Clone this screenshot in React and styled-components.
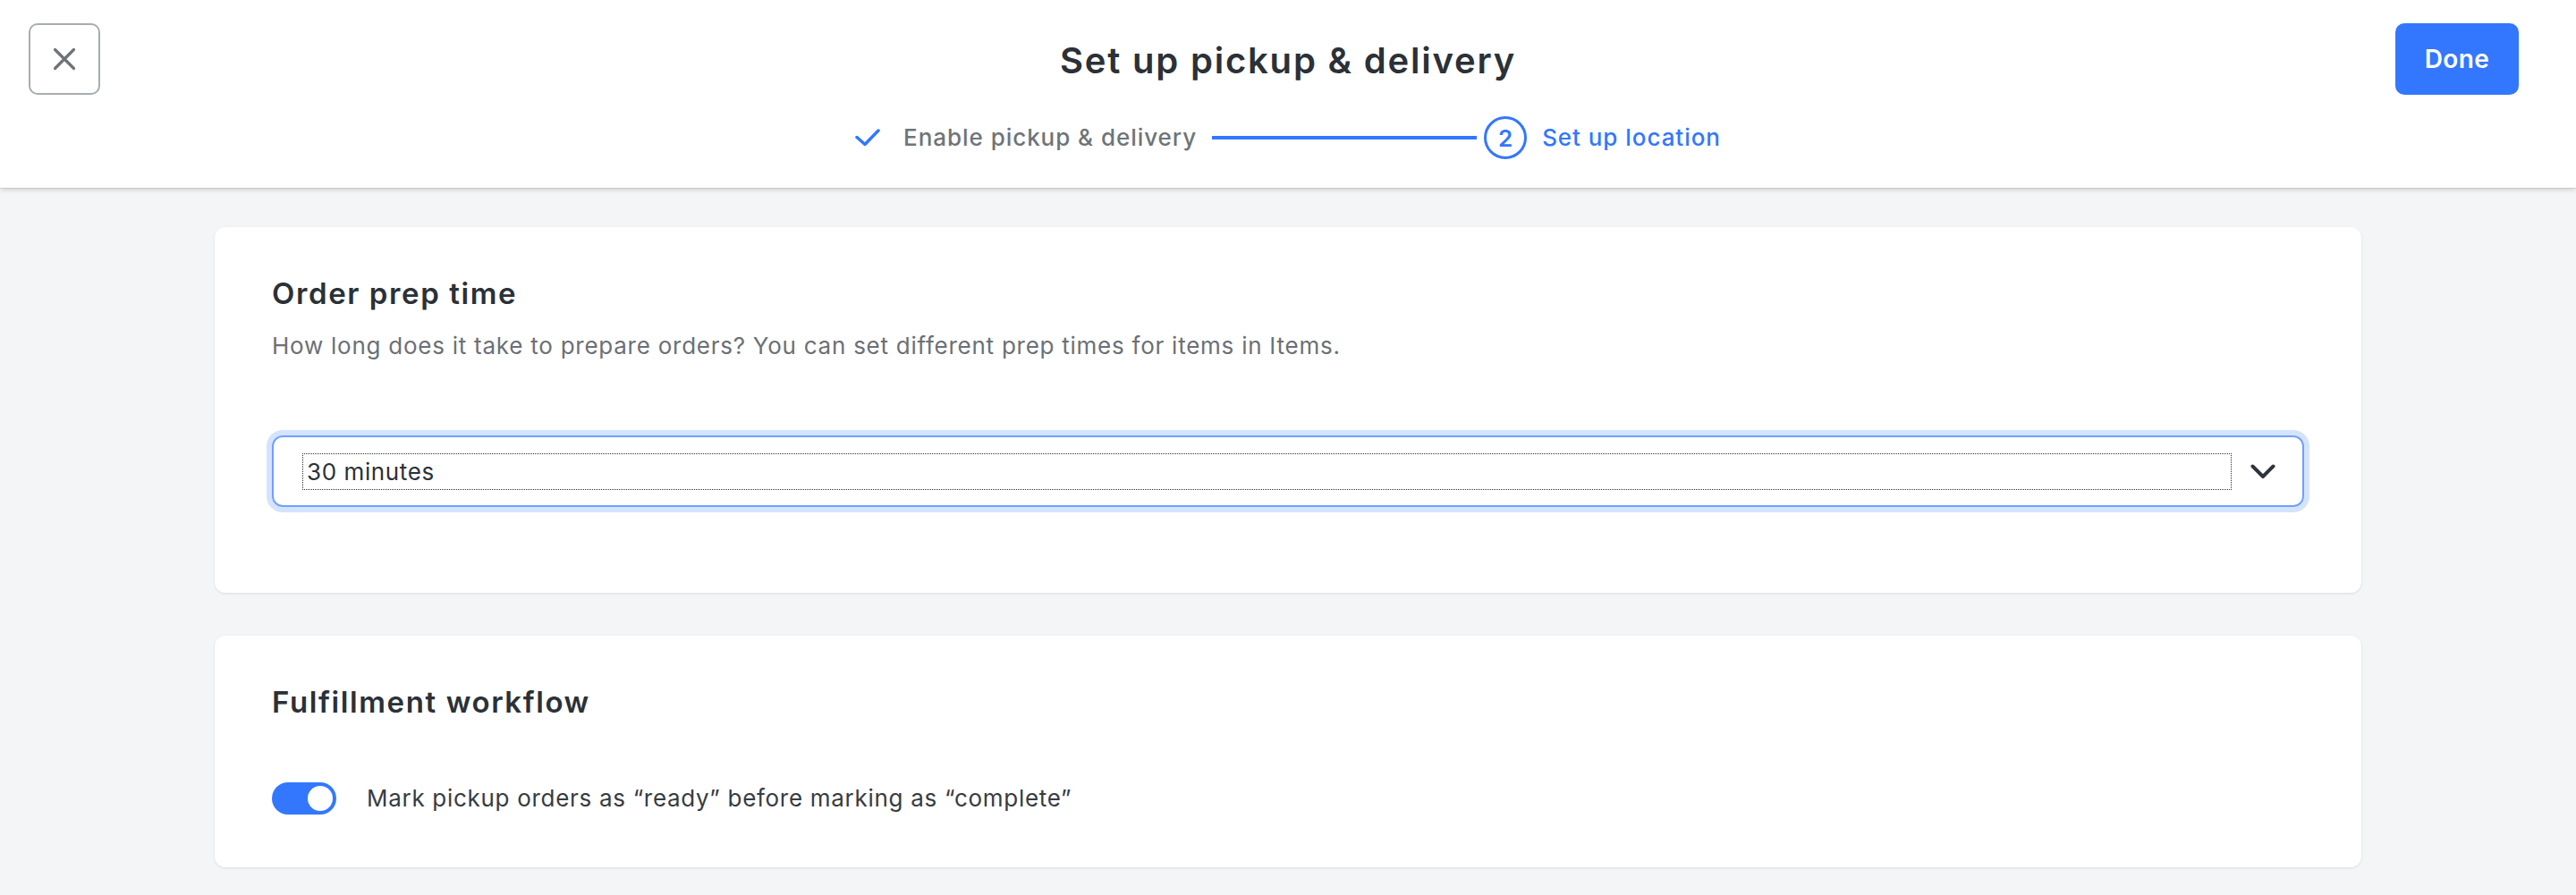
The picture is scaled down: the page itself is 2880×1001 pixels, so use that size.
import React from "react";
import styled, { createGlobalStyle } from "styled-components";

const GlobalStyle = createGlobalStyle`
  html, body {
    margin: 0;
    padding: 0;
    background: #f3f5f6;
    font-family: Inter, "Open Sans", "Liberation Sans", sans-serif;
    -webkit-font-smoothing: antialiased;
  }
  * { box-sizing: border-box; }
`;

const Page = styled.div`
  min-height: 1001px;
  background: #f3f5f6;
`;

const Header = styled.header`
  height: 210px;
  background: #ffffff;
  display: grid;
  grid-template-columns: 1fr auto 1fr;
  align-items: start;
  padding: 26px 32px 0 32px;
  box-shadow: 0 1px 0 rgba(0, 0, 0, 0.08), 0 2px 6px rgba(0, 0, 0, 0.16);
  position: relative;
  z-index: 1;
`;

const CloseButton = styled.button`
  justify-self: start;
  width: 80px;
  height: 80px;
  border: 2px solid #a7acb1;
  border-radius: 10px;
  background: #fff;
  display: flex;
  align-items: center;
  justify-content: center;
  padding: 0;
  cursor: pointer;
`;

const DoneButton = styled.button`
  justify-self: end;
  margin-right: 32px;
  width: 138px;
  height: 80px;
  border: none;
  border-radius: 10px;
  background: #3377ff;
  color: #fff;
  font-family: inherit;
  font-size: 28px;
  font-weight: 600;
  letter-spacing: 0.4px;
  cursor: pointer;
`;

const HeaderCenter = styled.div`
  display: flex;
  flex-direction: column;
  align-items: center;
  padding-top: 18px;
`;

const Title = styled.h1`
  margin: 0;
  font-size: 40px;
  line-height: 48px;
  font-weight: 600;
  color: #2b3137;
  letter-spacing: 1.8px;
`;

const Stepper = styled.div`
  margin-top: 38px;
  display: flex;
  align-items: center;
  height: 48px;
`;

const StepLabel = styled.span`
  font-size: 26px;
  line-height: 36px;
  font-weight: 500;
  letter-spacing: 0.95px;
  color: ${(p) => (p.$active ? "#3377ff" : "#6f7479")};
`;

const StepLine = styled.div`
  width: 296px;
  height: 4px;
  background: #3377ff;
  margin: 0 8px 0 17px;
`;

const StepCircle = styled.div`
  width: 48px;
  height: 48px;
  border-radius: 50%;
  border: 3.5px solid #3377ff;
  color: #3377ff;
  font-size: 26px;
  font-weight: 600;
  display: flex;
  align-items: center;
  justify-content: center;
  margin-right: 17px;
`;

const CheckWrap = styled.span`
  display: inline-flex;
  margin-right: 26px;
`;

const Main = styled.main`
  width: 2400px;
  margin: 0 auto;
  padding-top: 44px;
  display: flex;
  flex-direction: column;
  gap: 48px;
`;

const Card = styled.section`
  background: #fff;
  border-radius: 12px;
  box-shadow: 0 1px 3px rgba(0, 0, 0, 0.1);
  padding: 54px 64px ${(p) => p.$bottom || 59}px;
`;

const CardTitle = styled.h2`
  margin: 0;
  font-size: 33px;
  line-height: 40px;
  font-weight: 600;
  color: #2b3137;
  letter-spacing: 1.6px;
`;

const CardText = styled.p`
  margin: 21px 0 0;
  font-size: 26px;
  line-height: 36px;
  color: #6b7076;
  letter-spacing: 0.75px;
`;

const SelectBox = styled.div`
  margin-top: 82px;
  height: 80px;
  border: 2px solid #6fa0ff;
  border-radius: 12px;
  box-shadow: 0 0 0 6px #d4e3ff;
  display: flex;
  align-items: center;
  padding: 0 30px 0 32px;
  gap: 21px;
`;

const SelectValue = styled.div`
  flex: 1;
  height: 41px;
  border: 1px dotted #2b3137;
  padding: 0 4px;
  font-size: 26px;
  line-height: 39px;
  color: #2b3137;
  letter-spacing: 0.6px;
`;

const ToggleRow = styled.div`
  margin-top: 70px;
  display: flex;
  align-items: center;
  gap: 34px;
`;

const Toggle = styled.div`
  width: 72px;
  height: 36px;
  border-radius: 18px;
  background: ${(p) => (p.$on ? "#3377ff" : "#c4c8cc")};
  display: flex;
  align-items: center;
  justify-content: ${(p) => (p.$on ? "flex-end" : "flex-start")};
  padding: 0 4px;
  flex-shrink: 0;
`;

const Knob = styled.div`
  width: 28px;
  height: 28px;
  border-radius: 50%;
  background: #fff;
`;

const ToggleLabel = styled.span`
  font-size: 26px;
  line-height: 36px;
  color: #373c42;
  letter-spacing: 0.7px;
`;

const CloseIcon = () => (
  <svg width="26" height="26" viewBox="0 0 26 26" fill="none">
    <path d="M2.5 2.5 L23.5 23.5 M23.5 2.5 L2.5 23.5" stroke="#6e7378" strokeWidth="3.2" strokeLinecap="round" />
  </svg>
);

const CheckIcon = () => (
  <svg width="28" height="20" viewBox="0 0 28 20" fill="none">
    <polyline points="2,9.5 11,17.5 26,2" stroke="#3377ff" strokeWidth="3.5" strokeLinecap="round" strokeLinejoin="round" />
  </svg>
);

const ChevronIcon = () => (
  <svg width="28" height="17" viewBox="0 0 28 17" fill="none">
    <polyline points="2.5,2.5 14,14 25.5,2.5" stroke="#2f353b" strokeWidth="4" strokeLinecap="round" strokeLinejoin="round" />
  </svg>
);

export default function App() {
  return (
    <Page>
      <GlobalStyle />
      <Header>
        <CloseButton aria-label="Close">
          <CloseIcon />
        </CloseButton>
        <HeaderCenter>
          <Title>Set up pickup &amp; delivery</Title>
          <Stepper>
            <CheckWrap>
              <CheckIcon />
            </CheckWrap>
            <StepLabel>Enable pickup &amp; delivery</StepLabel>
            <StepLine />
            <StepCircle>2</StepCircle>
            <StepLabel $active>Set up location</StepLabel>
          </Stepper>
        </HeaderCenter>
        <DoneButton>Done</DoneButton>
      </Header>
      <Main>
        <Card $bottom={96}>
          <CardTitle>Order prep time</CardTitle>
          <CardText>
            How long does it take to prepare orders? You can set different prep times for items in Items.
          </CardText>
          <SelectBox>
            <SelectValue>30 minutes</SelectValue>
            <ChevronIcon />
          </SelectBox>
        </Card>
        <Card>
          <CardTitle>Fulfillment workflow</CardTitle>
          <ToggleRow>
            <Toggle $on>
              <Knob />
            </Toggle>
            <ToggleLabel>Mark pickup orders as “ready” before marking as “complete”</ToggleLabel>
          </ToggleRow>
        </Card>
      </Main>
    </Page>
  );
}
